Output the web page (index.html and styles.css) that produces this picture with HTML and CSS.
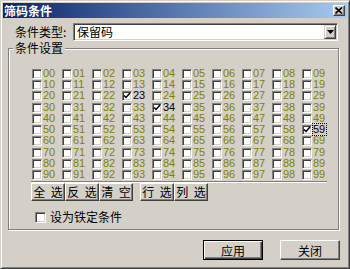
FILE: index.html
```html
<!DOCTYPE html>
<html lang="zh-CN">
<head>
  <meta charset="UTF-8">
  <meta name="viewport" content="width=device-width, initial-scale=1.0">
  <title>筛码条件</title>
  <link rel="stylesheet" href="styles.css">
</head>
<body>
  <div class="window">
    <div class="titlebar">
      <span class="title">筛码条件</span>
      <span class="close-btn">
        <svg width="8" height="7" viewBox="0 0 8 7"><path d="M0.5 0.5 L7 6.5 M7 0.5 L0.5 6.5" stroke="#000" stroke-width="1.6" fill="none"/></svg>
      </span>
    </div>
    <div class="content">
      <div class="type-row">
        <label class="type-label">条件类型:</label>
        <div class="combo">
          <span class="combo-text">保留码</span>
          <span class="combo-btn">
            <svg width="7" height="4" viewBox="0 0 7 4"><path d="M0 0 H7 L3.5 4 Z" fill="#000"/></svg>
          </span>
        </div>
      </div>

      <div class="group">
        <div class="group-title">条件设置</div>
        <div class="code-grid" id="code-grid"></div>
        <div class="separator"></div>
        <div class="btn-row">
          <button class="btn small">全 选</button>
          <button class="btn small">反 选</button>
          <button class="btn small gap-after">清 空</button>
          <button class="btn small">行 选</button>
          <button class="btn small">列 选</button>
        </div>
        <div class="lock-row">
          <span class="cb"></span>
          <span class="lock-text">设为铁定条件</span>
        </div>
      </div>

      <div class="footer">
        <button class="btn wide default">应用</button>
        <button class="btn wide">关闭</button>
      </div>
    </div>
  </div>

  <script>
    const checked = [23, 34, 59];
    const focused = 59;
    const grid = document.getElementById('code-grid');
    const tick = '<svg width="8" height="8" viewBox="0 0 8 8"><path d="M1 3.5 L3 5.5 L7 1" stroke="#000" stroke-width="1.5" fill="none"/></svg>';

    for (let i = 0; i < 100; i++) {
      const code = i.toString().padStart(2, '0');
      const isOn = checked.includes(i);
      const cell = document.createElement('div');
      cell.className = 'code-cell' + (isOn ? ' on' : '');
      cell.innerHTML = `<span class="cb">${isOn ? tick : ''}</span>` +
        `<span class="code${i === focused ? ' focus' : ''}">${code}</span>`;
      grid.appendChild(cell);
    }
  </script>
</body>
</html>
```

FILE: styles.css
```css
html, body {
  margin: 0;
  padding: 0;
  overflow: hidden;
}
body {
  font-family: "Noto Sans CJK SC", "Liberation Sans", sans-serif;
  font-size: 12px;
  color: #000;
  background-color: #d4d0c8;
}
.window {
  width: 350px;
  height: 269px;
  box-sizing: border-box;
  border: 1px solid;
  border-color: #d4d0c8 #404040 #404040 #d4d0c8;
  box-shadow: inset 1px 1px #fff, inset -1px -1px #808080;
  padding: 2px;
  background-color: #d4d0c8;
}
.titlebar {
  height: 15px;
  display: flex;
  align-items: center;
  justify-content: space-between;
  padding: 0 2px 0 1px;
  background: linear-gradient(to right, #0a246a, #a6caf0);
}
.title {
  color: #fff;
  font-weight: bold;
  line-height: 15px;
}
.close-btn {
  width: 12px;
  height: 11px;
  box-sizing: border-box;
  display: flex;
  align-items: center;
  justify-content: center;
  background-color: #d4d0c8;
  border: 1px solid;
  border-color: #fff #404040 #404040 #fff;
  box-shadow: inset -1px -1px #808080;
}
.content {
  padding: 0 5px;
}
.type-row {
  display: flex;
  align-items: center;
  margin-top: 5px;
}
.type-label {
  width: 65px;
  box-sizing: border-box;
  padding-left: 7px;
  line-height: 14px;
}
.combo {
  width: 265px;
  height: 18px;
  box-sizing: border-box;
  display: flex;
  align-items: center;
  justify-content: space-between;
  background-color: #fff;
  border: 1px solid;
  border-color: #808080 #fff #fff #808080;
  box-shadow: inset 1px 1px #404040, inset -1px -1px #d4d0c8;
  padding: 1px;
}
.combo-text {
  padding-left: 2px;
  line-height: 14px;
}
.combo-btn {
  width: 12px;
  height: 14px;
  box-sizing: border-box;
  display: flex;
  align-items: center;
  justify-content: center;
  background-color: #d4d0c8;
  border: 1px solid;
  border-color: #d4d0c8 #404040 #404040 #d4d0c8;
  box-shadow: inset 1px 1px #fff, inset -1px -1px #808080;
}
.group {
  width: 331px;
  box-sizing: border-box;
  margin-top: 7px;
  border: 1px solid #808080;
  box-shadow: inset 1px 1px #fff, 1px 1px #fff;
  padding-bottom: 6px;
}
.group-title {
  width: fit-content;
  margin: -7px 0 0 4px;
  padding: 0 2px;
  line-height: 12px;
  background-color: #d4d0c8;
}
.code-grid {
  display: grid;
  grid-template-columns: repeat(10, 30px);
  grid-template-rows: 11px 11px 12px 11px 11px 11px 12px 11px 11px 11px;
  margin: 14px 0 0 23px;
}
.code-cell {
  display: flex;
  align-items: center;
  height: 11px;
}
.cb {
  width: 10px;
  height: 10px;
  box-sizing: border-box;
  flex-shrink: 0;
  background-color: #fff;
  border: 1px solid;
  border-color: #808080 #fff #fff #808080;
  box-shadow: inset 1px 1px #404040, inset -1px -1px #d4d0c8;
}
.cb svg {
  display: block;
}
.code {
  font-family: "Liberation Sans", Arial, sans-serif;
  font-size: 11px;
  line-height: 11px;
  color: #808000;
  border: 1px solid transparent;
  padding: 0 1px 0 0;
}
.code-cell.on .code {
  color: #000;
}
.code.focus {
  border: 1px dotted #000;
}
.separator {
  width: 296px;
  margin: 1px 0 0 22px;
  border-top: 1px solid #808080;
  border-bottom: 1px solid #fff;
}
.btn-row {
  display: flex;
  margin-left: 22px;
}
.btn {
  box-sizing: border-box;
  padding: 0;
  margin: 0;
  font-family: "Noto Sans CJK SC", sans-serif;
  font-size: 12px;
  color: #000;
  background-color: #d4d0c8;
  border: 1px solid;
  border-color: #fff #404040 #404040 #fff;
  box-shadow: inset -1px -1px #808080;
}
.btn.small {
  width: 34px;
  height: 18px;
  line-height: 14px;
  word-spacing: 3px;
}
.btn.gap-after {
  margin-right: 7px;
}
.lock-row {
  display: flex;
  align-items: center;
  gap: 4px;
  height: 12px;
  margin: 10px 0 0 26px;
}
.lock-row .cb {
  width: 11px;
  height: 11px;
}
.lock-text {
  line-height: 12px;
}
.footer {
  display: flex;
  justify-content: flex-end;
  gap: 17px;
  margin-top: 10px;
  padding-right: 2px;
}
.btn.wide {
  width: 60px;
  height: 20px;
}
.btn.default {
  border: 1px solid #000;
  box-shadow: inset 1px 1px #fff, inset -1px -1px #404040, inset -2px -2px #808080;
}
```
